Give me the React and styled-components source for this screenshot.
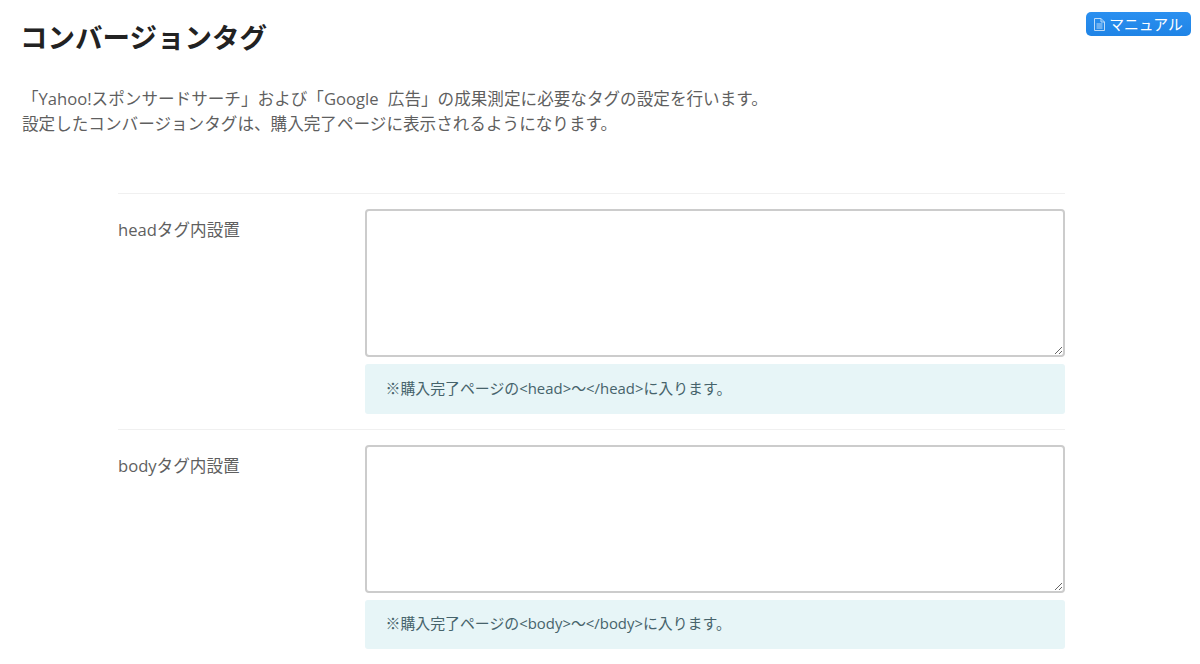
import React from "react";
import styled, { createGlobalStyle } from "styled-components";

const GlobalStyle = createGlobalStyle`
  html, body {
    margin: 0;
    padding: 0;
    background: #fff;
    overflow: hidden;
  }
  body {
    font-family: "Open Sans", "Noto Sans CJK JP", sans-serif;
    color: #555;
  }
`;

const Page = styled.div`
  width: 1200px;
  height: 664px;
  box-sizing: border-box;
  padding: 20px 9px 0 22px;
  overflow: hidden;
`;

const Header = styled.header`
  display: flex;
  justify-content: space-between;
  align-items: flex-start;
`;

const Title = styled.h1`
  margin: 0 0 0 -2px;
  font-size: 27.5px;
  line-height: 36px;
  font-weight: 700;
  color: #222;
`;

const ManualButton = styled.a`
  display: flex;
  align-items: center;
  justify-content: center;
  gap: 4px;
  width: 105px;
  height: 24px;
  margin-top: -8px;
  box-sizing: border-box;
  background: linear-gradient(#2b90f0, #1f84e6);
  border-radius: 5px;
  color: #fff;
  font-size: 14.8px;
  line-height: 1;
  svg {
    opacity: 0.7;
  }
`;

const Description = styled.p`
  margin: 30px 0 0;
  font-size: 16.6px;
  line-height: 25px;
  word-spacing: 5px;
  color: #5f5f5f;
`;

const Form = styled.div`
  width: 947px;
  margin: 57px 0 0 96px;
  border-top: 1px solid #f0f0f0;
`;

const Row = styled.div`
  display: grid;
  grid-template-columns: 246.5px 700.5px;
  padding: 15px 0;
  border-bottom: 1px solid #f0f0f0;
`;

const Label = styled.label`
  padding-top: 8px;
  font-size: 16.6px;
  line-height: 26px;
  color: #5f5f5f;
`;

const Field = styled.div`
  display: flex;
  flex-direction: column;
  gap: 7px;
`;

const TagInput = styled.textarea`
  display: block;
  width: 100%;
  height: 148px;
  box-sizing: border-box;
  border: 2px solid #ccc;
  border-radius: 4px;
  background: #fff;
  resize: vertical;
  outline: none;
`;

const Note = styled.div`
  height: 49.5px;
  box-sizing: border-box;
  padding: 0 21px 3px;
  display: flex;
  align-items: center;
  background: #e7f5f7;
  border-radius: 3px;
  font-size: 14.9px;
  color: #46636b;
`;

const DocIcon = () => (
  <svg width="11" height="13" viewBox="0 0 11 13" fill="none" stroke="#fff" strokeWidth="1">
    <path d="M.5 .5h6.5l3.5 3.5v8.5h-10z" />
    <path d="M7 .5v3.5h3.5M2.5 6h6M2.5 8h6M2.5 10h6" />
  </svg>
);

const rows = [
  { label: "headタグ内設置", tag: "head" },
  { label: "bodyタグ内設置", tag: "body" },
];

export default function App() {
  return (
    <Page>
      <GlobalStyle />
      <Header>
        <Title>コンバージョンタグ</Title>
        <ManualButton>
          <DocIcon />
          マニュアル
        </ManualButton>
      </Header>
      <Description>
        「Yahoo!スポンサードサーチ」および「Google 広告」の成果測定に必要なタグの設定を行います。
        <br />
        設定したコンバージョンタグは、購入完了ページに表示されるようになります。
      </Description>
      <Form>
        {rows.map((row) => (
          <Row key={row.tag}>
            <Label>{row.label}</Label>
            <Field>
              <TagInput />
              <Note>
                ※購入完了ページの&lt;{row.tag}&gt;～&lt;/{row.tag}&gt;に入ります。
              </Note>
            </Field>
          </Row>
        ))}
      </Form>
    </Page>
  );
}
